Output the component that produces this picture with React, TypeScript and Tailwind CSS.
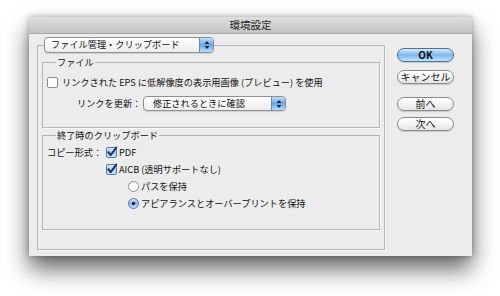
import React, { useId } from "react";

function CheckBox({ checked }: { checked?: boolean }) {
  const id = useId();
  return (
    <svg width="11" height="11" viewBox="0 0 11 11" className="shrink-0 overflow-visible">
      <defs>
        <linearGradient id={id} x1="0" y1="0" x2="0" y2="1">
          <stop offset="0" stopColor="#e4effb" />
          <stop offset="0.5" stopColor="#a9c9ee" />
          <stop offset="1" stopColor="#d3e8fb" />
        </linearGradient>
      </defs>
      <rect
        x="0.5"
        y="0.5"
        width="10"
        height="10"
        rx="1.5"
        fill={checked ? `url(#${id})` : "#ffffff"}
        stroke={checked ? "#5678a8" : "#8c8c8c"}
      />
      {checked && (
        <path d="M2.3 5.2 L4.6 8.2 L10.2 0.6" stroke="#1b2d55" strokeWidth="1.9" fill="none" strokeLinecap="round" strokeLinejoin="round" />
      )}
    </svg>
  );
}

function Radio({ checked }: { checked?: boolean }) {
  const id = useId();
  return (
    <svg width="11" height="11" viewBox="0 0 11 11" className="shrink-0">
      <defs>
        <linearGradient id={id} x1="0" y1="0" x2="0" y2="1">
          <stop offset="0" stopColor="#dceafa" />
          <stop offset="0.5" stopColor="#8fb8ea" />
          <stop offset="1" stopColor="#cfe6fb" />
        </linearGradient>
      </defs>
      <circle cx="5.5" cy="5.5" r="5" fill={checked ? `url(#${id})` : "#ffffff"} stroke={checked ? "#5678a8" : "#8c8c8c"} />
      {checked && <circle cx="5.5" cy="5.5" r="1.8" fill="#1b2440" />}
    </svg>
  );
}

function Arrows() {
  return (
    <svg width="6" height="10" viewBox="0 0 6 10">
      <path d="M3 1 L5.5 4 L0.5 4 Z" fill="#1d2a44" />
      <path d="M3 9 L5.5 6 L0.5 6 Z" fill="#1d2a44" />
    </svg>
  );
}

function Popup({ text, w, h, pl }: { text: string; w: string; h: string; pl: string }) {
  return (
    <div className={`flex items-center rounded-[4px] border border-[#8f8f8f] bg-gradient-to-b from-white to-[#ececec] shadow-[0_1px_1px_rgba(0,0,0,0.12)] ${w} ${h}`}>
      <span className={`flex-1 whitespace-nowrap text-[9.2px] leading-none text-[#111] ${pl}`}>{text}</span>
      <div className="flex h-full w-[14px] items-center justify-center rounded-r-[3px] border-l border-[#6f87a8] bg-gradient-to-b from-[#c2ddf7] via-[#6aa5e6] to-[#b5e0fb]">
        <Arrows />
      </div>
    </div>
  );
}

function Btn({ children, def, cls }: { children: React.ReactNode; def?: boolean; cls: string }) {
  return (
    <div
      className={`flex h-[14px] w-[57px] items-center justify-center rounded-full border text-[10px] leading-none text-[#111] shadow-[0_1px_1px_rgba(0,0,0,0.15)] ${
        def
          ? "border-[#4d6fa3] bg-gradient-to-b from-[#d6ebfc] via-[#7fb6ee] to-[#bfe6fd] font-bold"
          : "border-[#8a8a8a] bg-gradient-to-b from-white via-[#f4f4f4] to-[#e4e4e4]"
      } ${cls}`}
    >
      {children}
    </div>
  );
}

export default function App() {
  return (
    <div className="h-[296px] w-[500px] overflow-hidden bg-white pl-[29px] pt-[17px] font-['Noto_Sans_CJK_JP','Noto_Sans',sans-serif] text-[#111]">
      <div className="flex h-[239px] w-[443px] flex-col shadow-[0_13px_22px_rgba(0,0,0,0.6),0_0_6px_rgba(0,0,0,0.3)]">
        <div className="flex h-[17px] items-center justify-center border-b border-[#a8a8a8] bg-gradient-to-b from-[#dedede] to-[#c4c4c4] text-[10.5px] leading-none text-[#1e1e1e]">
          環境設定
        </div>
        <div className="flex flex-1 bg-[#ececec]">
          <fieldset className="ml-[8px] mt-[3px] h-[213px] w-[348px] border border-[#b6b6b6] px-[4px] shadow-[1px_1px_0_#f9f9f9]">
            <legend className="ml-[2px] p-0">
              <Popup text="ファイル管理・クリップボード" w="w-[170px]" h="h-[16px]" pl="pl-[6px]" />
            </legend>
            <fieldset className="mt-[3px] border border-[#b6b6b6] pb-[16px] pl-[4px] shadow-[1px_1px_0_#f9f9f9]">
              <legend className="ml-[9px] px-[1px] text-[9.2px] leading-[13px]">ファイル</legend>
              <div className="mt-[7px] flex h-[13px] items-center gap-[4px] text-[9.2px] leading-none">
                <CheckBox />
                <span className="whitespace-nowrap">リンクされた EPS に低解像度の表示用画像 (プレビュー) を使用</span>
              </div>
              <div className="mt-[7px] flex h-[15px] items-center text-[9.2px] leading-none">
                <span className="ml-[30px] w-[66px] whitespace-nowrap">リンクを更新：</span>
                <Popup text="修正されるときに確認" w="w-[143px]" h="h-[15px]" pl="pl-[9px]" />
              </div>
            </fieldset>
            <fieldset className="mt-[1px] border border-[#b6b6b6] pb-[17px] pl-[4px] shadow-[1px_1px_0_#f9f9f9]">
              <legend className="ml-[9px] px-[1px] text-[9.2px] leading-[13px]">終了時のクリップボード</legend>
              <div className="mt-[2px] flex text-[9.2px] leading-none">
                <div className="flex h-[17px] w-[59px] items-center whitespace-nowrap">コピー形式：</div>
                <div className="flex flex-col">
                  <div className="flex h-[17px] items-center gap-[2px]">
                    <CheckBox checked />
                    <span className="whitespace-nowrap">PDF</span>
                  </div>
                  <div className="flex h-[17px] items-center gap-[2px]">
                    <CheckBox checked />
                    <span className="whitespace-nowrap">AICB (透明サポートなし)</span>
                  </div>
                  <div className="ml-[22px] flex h-[17px] items-center gap-[2px]">
                    <Radio />
                    <span className="whitespace-nowrap">パスを保持</span>
                  </div>
                  <div className="ml-[22px] flex h-[17px] items-center gap-[2px]">
                    <Radio checked />
                    <span className="whitespace-nowrap">アピアランスとオーバープリントを保持</span>
                  </div>
                </div>
              </div>
            </fieldset>
          </fieldset>
          <div className="ml-[12px] mt-[14px] flex flex-col">
            <Btn def cls="">OK</Btn>
            <Btn cls="mt-[8px]">キャンセル</Btn>
            <Btn cls="mt-[13px]">前へ</Btn>
            <Btn cls="mt-[6px]">次へ</Btn>
          </div>
        </div>
      </div>
    </div>
  );
}
